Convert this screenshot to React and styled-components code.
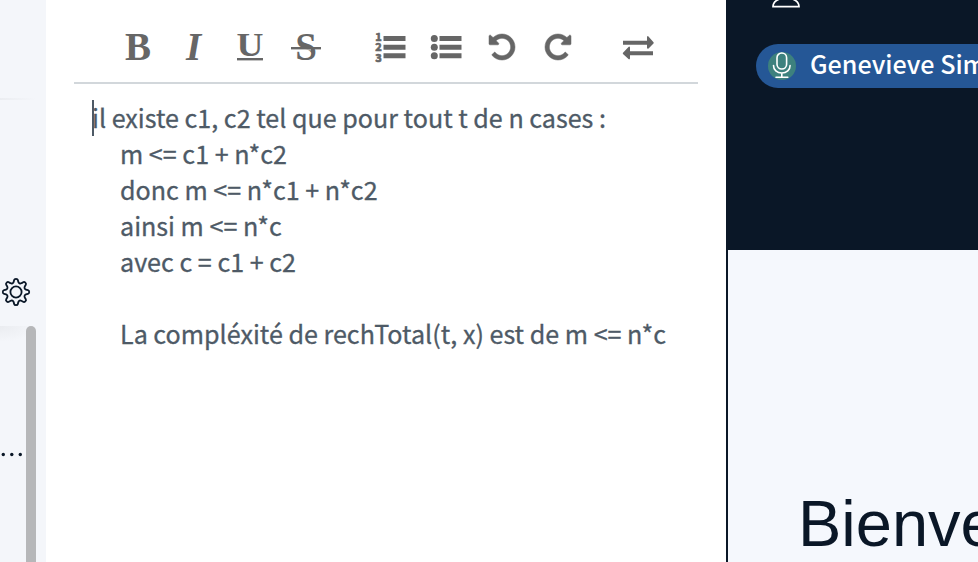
import React from "react";
import styled, { createGlobalStyle } from "styled-components";

const Global = createGlobalStyle`
  *, *::before, *::after { box-sizing: border-box; }
  html, body { margin: 0; height: 100%; overflow: hidden; background: #fff; }
`;

const UI = `"Noto Sans CJK SC", "Noto Sans", sans-serif`;
const NAVY = "#0a1727";

const Page = styled.div`
  display: grid;
  grid-template-columns: 46px 680px 252px;
  width: 978px;
  height: 562px;
  overflow: hidden;
  font-family: ${UI};
`;

const Sidebar = styled.aside`
  display: flex;
  flex-direction: column;
  background: #f4f6fa;
  overflow: hidden;
`;

const SidebarTop = styled.div`
  height: 98px;
`;

const FadeRule = styled.div`
  height: 2px;
  width: 36px;
  background: linear-gradient(90deg, #ebedf1, #f4f6fa);
`;

const SettingsRow = styled.div`
  display: flex;
  align-items: center;
  height: 30px;
  margin: 176.500px 0 19.500px 1px;
`;

const UserList = styled.div`
  display: flex;
  justify-content: space-between;
  flex: 1;
  width: 36px;
  background: radial-gradient(ellipse 36px 16px at 0 0, #eaecf0, #f4f6fa);
`;

const Dots = styled.svg`
  margin-top: 124px;
`;

const ScrollThumb = styled.div`
  width: 10px;
  background: #b6b7b9;
  border-radius: 5px 5px 0 0;
`;

const Editor = styled.main`
  display: flex;
  flex-direction: column;
  padding: 0 28px;
  background: #fff;
`;

const Toolbar = styled.div`
  display: flex;
  align-items: center;
  height: 84px;
  padding: 12px 0 0 36px;
  border-bottom: 2px solid #d2d7db;
  color: #666;
`;

const ToolButton = styled.div`
  display: flex;
  align-items: center;
  justify-content: center;
  width: 56px;
  height: 40px;
  margin-left: ${(p) => p.$gap || 0}px;

  svg { display: block; overflow: visible; }
`;

const Letter = styled.text`
  font: ${(p) => (p.$italic ? "italic " : "")}bold ${(p) => p.$size || 39}px "Liberation Serif", serif;
  fill: currentColor;
  text-anchor: middle;
`;

const Digit = styled.text`
  font: bold 11px "Noto Sans CJK SC", sans-serif;
  fill: currentColor;
  stroke: currentColor;
  stroke-width: 0.7px;
  text-anchor: middle;
`;

const Pad = styled.div`
  margin: 16px 0 0 18px;
  color: #4e5a66;
`;

const Line = styled.div`
  height: 36px;
  line-height: 34px;
  font-size: 25.1px;
  -webkit-text-stroke: 0.3px currentColor;
  white-space: pre;
  padding-left: ${(p) => (p.$indent ? 28 : 0)}px;
`;

const Caret = styled.span`
  display: inline-block;
  width: 2px;
  height: 36px;
  margin-right: -2px;
  vertical-align: top;
  background: #4e5a66;
`;

const Side = styled.section`
  display: flex;
  flex-direction: column;
  border-left: 2px solid ${NAVY};
  overflow: hidden;
`;

const Header = styled.header`
  height: 250px;
  padding: 0 0 0 28px;
  background: ${NAVY};
  flex: none;
`;

const UserIcon = styled.svg`
  display: block;
  height: 10px;
  margin: 0 0 34px 16px;
`;

const Talker = styled.div`
  display: flex;
  align-items: center;
  gap: 14px;
  width: 300px;
  height: 44px;
  padding-left: 12px;
  border-radius: 22px;
  background: #255796;
  color: #fff;
  font-size: 25.1px;
  line-height: 38px;
  white-space: nowrap;
`;

const TalkerName = styled.span`
  font-weight: 500;
  height: 44px;
`;

const MicBadge = styled.div`
  display: flex;
  width: 28px;
  height: 28px;
  border-radius: 50%;
  background: #3d817e;

  svg { overflow: visible; }
`;

const Slide = styled.div`
  flex: 1;
  padding: 237px 0 0 70px;
  background: #f5f8fd;
  color: ${NAVY};
  font: 65px/74px "Liberation Sans", Arial, sans-serif;
  white-space: nowrap;
`;

function gearPath() {
  const pts = [];
  const shape = [[-11, 11], [-7, 13.3], [7, 13.3], [11, 11], [17, 9.4], [28, 9.4]];
  for (let k = 0; k < 8; k += 1) {
    shape.forEach(([a, r]) => {
      const t = ((k * 45 + a) * Math.PI) / 180;
      pts.push([15 + r * Math.cos(t), 15 + r * Math.sin(t)]);
    });
  }
  const mid = (a, b) => [(a[0] + b[0]) / 2, (a[1] + b[1]) / 2].map((n) => n.toFixed(2));
  let d = `M${mid(pts[pts.length - 1], pts[0])}`;
  pts.forEach((p, i) => {
    d += `Q${p.map((n) => n.toFixed(2))} ${mid(p, pts[(i + 1) % pts.length])}`;
  });
  return `${d}Z`;
}

const Gear = () => (
  <svg width="30" height="30" fill="none" stroke={NAVY} strokeWidth="1.8">
    <path d={gearPath()} />
    <circle cx="15" cy="15" r="5.6" />
  </svg>
);

const UNDO =
  "M1536 896q0 156-61 298t-164 245-245 164-298 61q-172 0-327-72.500t-264-204.500q-7-10-6.500-22.500t8.500-20.500l137-138q10-9 25-9 16 2 23 12 73 95 179 147t225 52q104 0 198.500-40.500t163.500-109.500 109.500-163.500 40.500-198.500-40.500-198.500-109.500-163.500-163.500-109.500-198.500-40.500q-98 0-188 35.500t-160 101.500l137 138q31 30 14 69-17 40-59 40h-448q-26 0-45-19t-19-45v-448q0-42 40-59 39-17 69 14l130 129q107-101 244.500-156.500t284.500-55.500q156 0 298 61t245 164 164 245 61 298z";

const Turn = ({ flip }) => (
  <svg width="26" height="26" viewBox="0 128 1536 1536" fill="currentColor" stroke="currentColor" strokeWidth="30">
    <path d={UNDO} transform={flip ? "translate(1536 0) scale(-1 1)" : undefined} />
  </svg>
);

const Bars = () => (
  <path d="M8.500 6.500h22M8.500 15.200h22M8.500 23.800h22" stroke="currentColor" strokeWidth="5" />
);

export default function App() {
  return (
    <>
      <Global />
      <Page>
        <Sidebar>
          <SidebarTop />
          <FadeRule />
          <SettingsRow><Gear /></SettingsRow>
          <UserList>
            <Dots width="24" height="10" fill={NAVY}>
              <circle cx="3.300" cy="4.500" r="1.700" />
              <circle cx="11.800" cy="4.500" r="1.700" />
              <circle cx="20.300" cy="4.500" r="1.700" />
            </Dots>
            <ScrollThumb />
          </UserList>
        </Sidebar>

        <Editor>
          <Toolbar>
            <ToolButton>
              <svg width="30" height="30"><Letter x="15" y="28.300">B</Letter></svg>
            </ToolButton>
            <ToolButton>
              <svg width="30" height="30"><Letter $italic x="14.500" y="28.300">I</Letter></svg>
            </ToolButton>
            <ToolButton>
              <svg width="30" height="30">
                <g transform="translate(15 0) scale(1.130 1)">
                  <Letter $size={33} x="0" y="24">U</Letter>
                </g>
                <path d="M2 27.200h26" stroke="currentColor" strokeWidth="2.400" />
              </svg>
            </ToolButton>
            <ToolButton>
              <svg width="30" height="30">
                <Letter x="15" y="28.300">S</Letter>
                <path d="M0 17.800h20" stroke="#fff" strokeWidth="1" />
                <path d="M0 16.200h30" stroke="currentColor" strokeWidth="2.400" />
              </svg>
            </ToolButton>
            <ToolButton $gap={28}>
              <svg width="30" height="30">
                <Digit x="3.500" y="8.800">1</Digit>
                <Digit x="3.500" y="19.200">2</Digit>
                <Digit x="3.500" y="29.600">3</Digit>
                <Bars />
              </svg>
            </ToolButton>
            <ToolButton>
              <svg width="30" height="30" fill="currentColor">
                <circle cx="3.300" cy="6.500" r="3.500" />
                <circle cx="3.300" cy="15.200" r="3.500" />
                <circle cx="3.300" cy="23.800" r="3.500" />
                <Bars />
              </svg>
            </ToolButton>
            <ToolButton><Turn /></ToolButton>
            <ToolButton><Turn flip /></ToolButton>
            <ToolButton $gap={24}>
              <svg width="30" height="30" fill="currentColor">
                <path d="M0 8.700h24V5q.5-1.500 1.500-.5l5 5.700q.5.600 0 1.200l-5 5q-1 .8-1.500-.5V12.700H0z" />
                <path d="M30 19.300H7V15.500q-.5-1.500-1.500-.5l-5.500 5.700q-.5.600 0 1.200l5.500 5.200q1 .8 1.500-.5V23.300h23z" />
              </svg>
            </ToolButton>
          </Toolbar>
          <Pad>
            <Line><Caret />il existe c1, c2 tel que pour tout t de n cases :</Line>
            <Line $indent>m &lt;= c1 + n*c2</Line>
            <Line $indent>donc m &lt;= n*c1 + n*c2</Line>
            <Line $indent>ainsi m &lt;= n*c</Line>
            <Line $indent>avec c = c1 + c2</Line>
            <Line />
            <Line $indent>La compléxité de rechTotal(t, x) est de m &lt;= n*c</Line>
          </Pad>
        </Editor>

        <Side>
          <Header>
            <UserIcon width="28" height="10" fill="none" stroke="#fff" strokeWidth="1.700">
              <path d="M7.500-1Q1 1.500 1 6.600h26Q27 1.500 20.500-1" />
            </UserIcon>
            <Talker>
              <MicBadge>
                <svg width="28" height="28" fill="none" stroke="#fff" strokeWidth="1.600" strokeLinecap="round">
                  <rect x="9" y="1" width="9.600" height="16" rx="4.800" />
                  <path d="M5.500 13.500c0 4.500 3.500 7.500 8.300 7.500s8.300-3 8.300-7.500M13.800 21v3.800M8 25.200h11.800" />
                </svg>
              </MicBadge>
              <TalkerName>Genevieve Simon</TalkerName>
            </Talker>
          </Header>
          <Slide>Bienvenue</Slide>
        </Side>
      </Page>
    </>
  );
}
